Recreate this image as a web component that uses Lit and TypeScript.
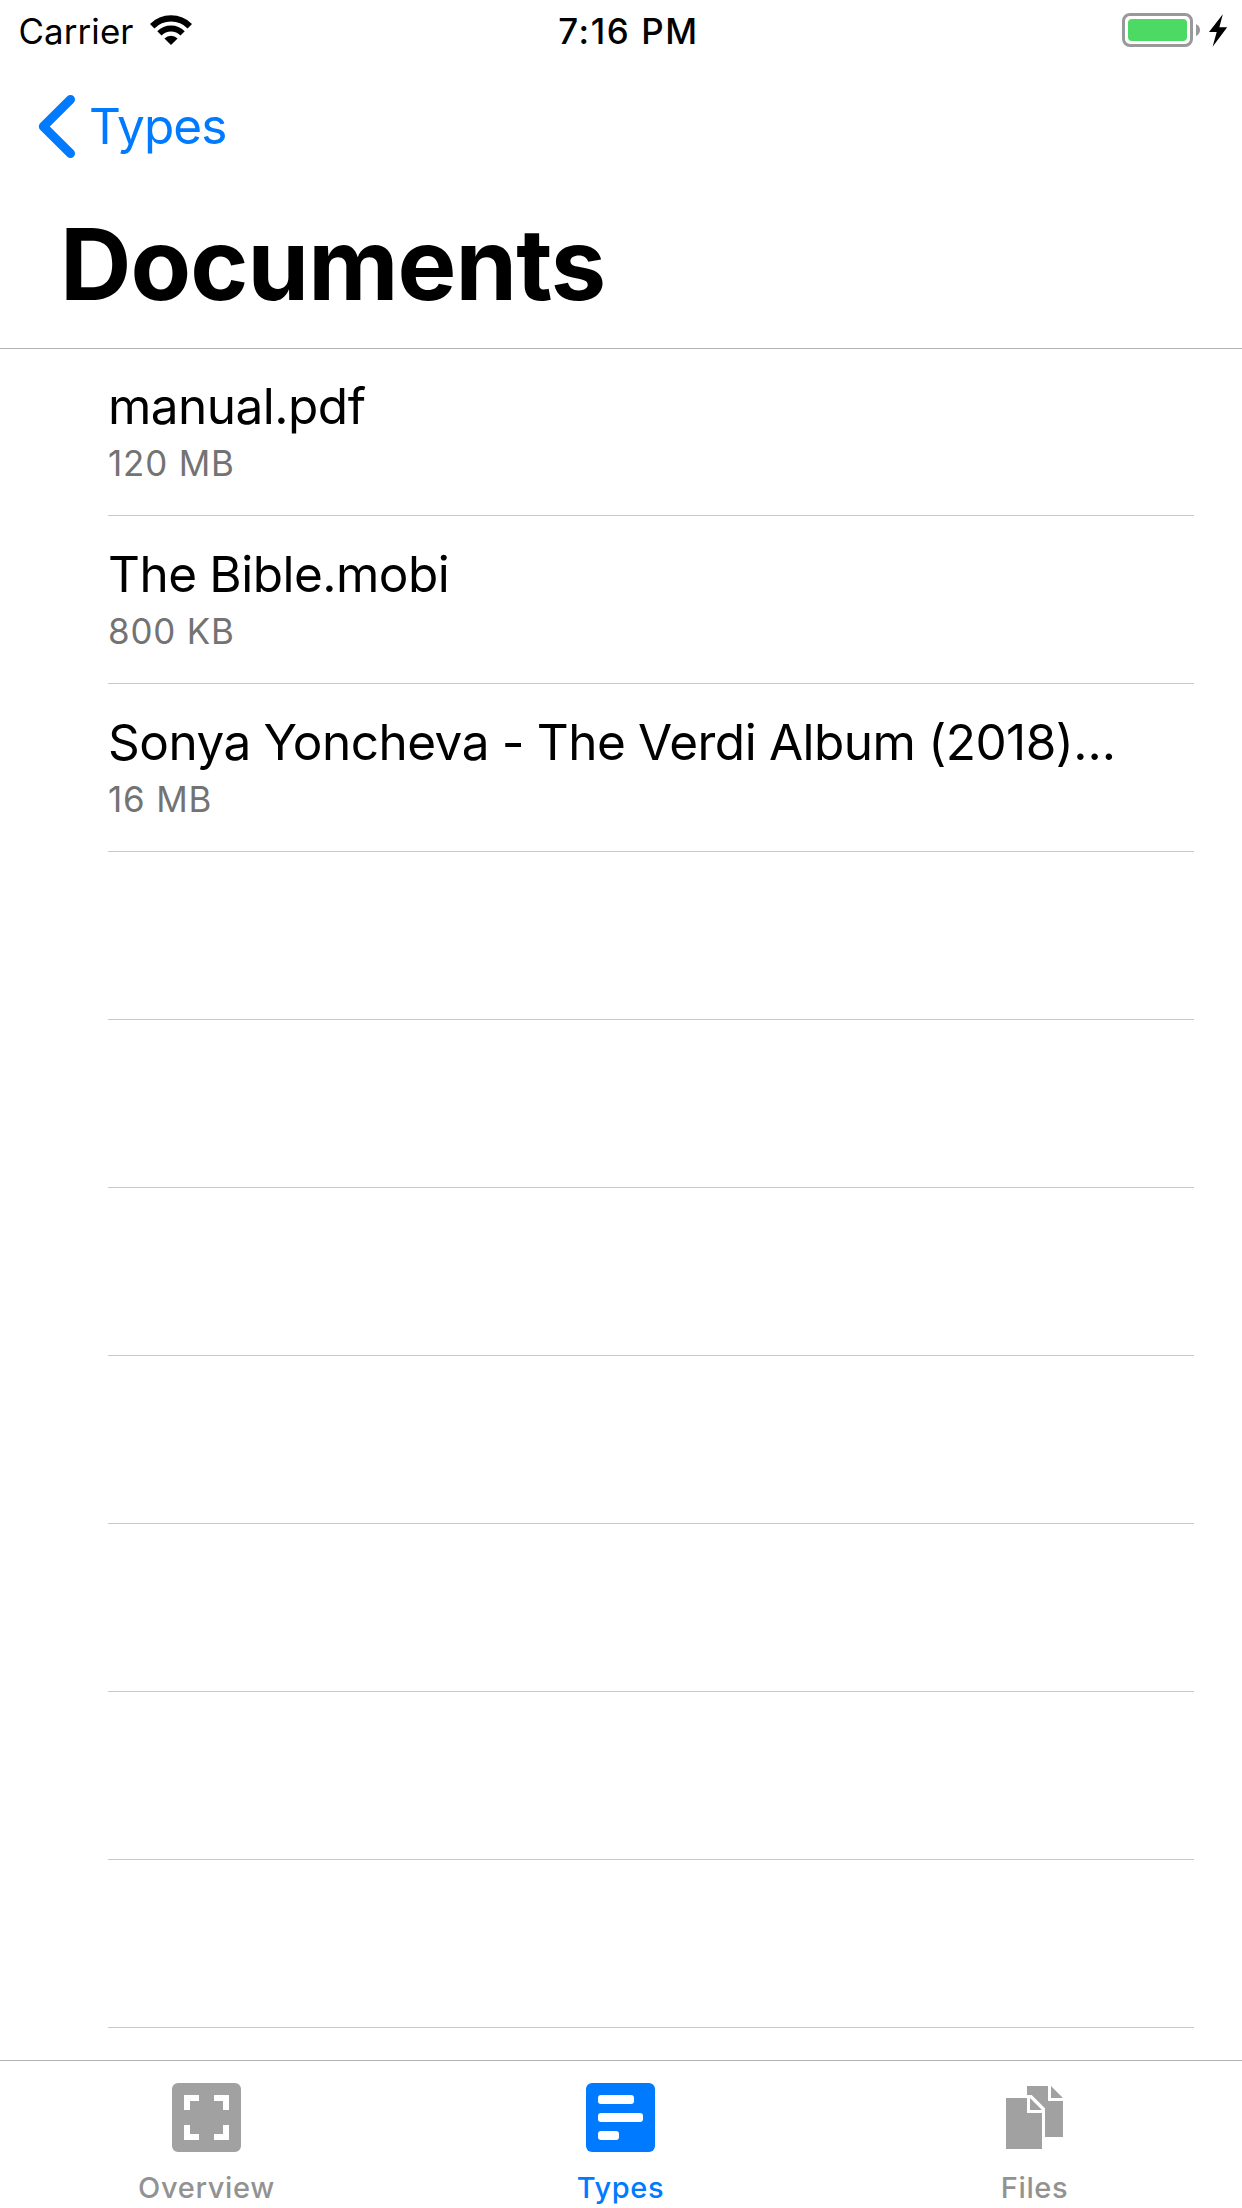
import { LitElement, html, svg, css } from "lit";
import { customElement, property } from "lit/decorators.js";
import { classMap } from "lit/directives/class-map.js";

interface FileEntry {
  name: string;
  size: string;
}

@customElement("status-bar")
class StatusBar extends LitElement {
  static styles = css`
    :host {
      display: grid;
      grid-template-columns: 1fr auto 1fr;
      height: 60px;
      line-height: 42px;
      font-size: 34.9px;
      color: #000;
    }
    .left {
      display: flex;
      align-items: flex-start;
      padding: 10px 0 0 18.5px;
    }
    .carrier {
      letter-spacing: 0.1px;
    }
    .wifi {
      margin: 4px 0 0 15.5px;
    }
    .time {
      padding: 10px 0 0 15px;
      font-weight: 550;
      letter-spacing: 1.6px;
    }
    .right {
      display: flex;
      justify-content: flex-end;
      padding: 12px 14px 0 0;
    }
    svg {
      display: block;
    }
  `;
  render() {
    return html`
      <div class="left">
        <span class="carrier">Carrier</span>
        <svg class="wifi" width="44" height="32" viewBox="0 0 44 32" fill="none" stroke="#000">
          <path d="M3.2 12.2 A26.6 26.6 0 0 1 40.8 12.2" stroke-width="6.2" />
          <path d="M10.4 19.4 A16.4 16.4 0 0 1 33.6 19.4" stroke-width="6" />
          <path d="M22 31 L15.4 24.4 A9.4 9.4 0 0 1 28.6 24.4 Z" fill="#000" stroke="none" />
        </svg>
      </div>
      <div class="time">7:16 PM</div>
      <div class="right">
        <svg width="106" height="36" viewBox="0 0 106 36">
          <rect x="1.5" y="2.5" width="68" height="31" rx="6.5" fill="none" stroke="#999" stroke-width="3" />
          <rect x="6" y="7" width="59" height="22" rx="4" fill="#4cd964" />
          <path d="M74 12 Q78 14 78 18 Q78 22 74 24 Z" fill="#999" />
          <path d="M100.8 2.2 L87 20 L94.7 20 L90.6 34.8 L105.2 15.2 L97.4 15.2 Z" fill="#000" />
        </svg>
      </div>
    `;
  }
}

@customElement("nav-header")
class NavHeader extends LitElement {
  @property() back = "";
  @property() heading = "";
  static styles = css`
    :host {
      display: block;
      height: 288px;
      box-shadow: 0 1px 0 #b2b2b2;
    }
    .back {
      display: flex;
      align-items: flex-start;
      padding: 34px 0 0 38px;
      color: #007aff;
    }
    .chevron {
      display: block;
      width: 38px;
      height: 66px;
    }
    .label {
      margin-left: 13px;
      padding-top: 2px;
      font-size: 49.5px;
      line-height: 60px;
      letter-spacing: -0.9px;
    }
    .heading {
      margin: 0;
      padding: 44px 0 0 60px;
      font-size: 98.9px;
      line-height: 120px;
      font-weight: 700;
      letter-spacing: -0.9px;
      color: #000;
    }
  `;
  render() {
    return html`
      <div class="back">
        <svg class="chevron" viewBox="0 0 38 66" fill="none" stroke="currentColor" stroke-width="9" stroke-linecap="round" stroke-linejoin="round">
          <path d="M32.5 5.5 L5.3 32.5 L32.5 59.5" />
        </svg>
        <span class="label">${this.back}</span>
      </div>
      <h1 class="heading">${this.heading}</h1>
    `;
  }
}

@customElement("file-list")
class FileList extends LitElement {
  @property({ attribute: false }) files: FileEntry[] = [];
  @property({ type: Number }) rows = 10;
  static styles = css`
    :host {
      display: block;
      padding: 0 48px 0 108px;
      overflow: hidden;
    }
    .row {
      box-sizing: border-box;
      height: 168px;
      padding-top: 28px;
      border-bottom: 1px solid #c8c8c8;
      white-space: nowrap;
    }
    .name {
      font-size: 49.5px;
      line-height: 60px;
      letter-spacing: -0.52px;
      word-spacing: -0.6px;
      color: #000;
    }
    .size {
      margin-top: 6px;
      font-size: 34.9px;
      line-height: 42px;
      letter-spacing: 0.85px;
      color: #737373;
    }
  `;
  render() {
    return Array.from({ length: this.rows }, (_, i) => {
      const file = this.files[i];
      return html`<div class="row">
        ${file
          ? html`<div class="name">${file.name}</div>
              <div class="size">${file.size}</div>`
          : ""}
      </div>`;
    });
  }
}

const icons = {
  overview: svg`<path fill="currentColor" fill-rule="evenodd" d="M6 0 H63 A6 6 0 0 1 69 6 V63 A6 6 0 0 1 63 69 H6 A6 6 0 0 1 0 63 V6 A6 6 0 0 1 6 0 Z
    M12 12 V27 H18 V18 H27 V12 Z M42 12 V18 H51 V27 H57 V12 Z M12 42 V57 H27 V51 H18 V42 Z M51 42 V51 H42 V57 H57 V42 Z" />`,
  types: svg`<rect width="69" height="69" rx="6" fill="currentColor" />
    <rect x="12" y="12" width="36" height="9" rx="3" fill="#fff" />
    <rect x="12" y="30" width="45" height="9" rx="3" fill="#fff" />
    <rect x="12" y="48" width="21" height="9" rx="3" fill="#fff" />`,
  files: svg`<path fill="currentColor" d="M6 15 H27 V30 H42 V66 H6 Z M30 15 L42 27 H30 Z
    M27 3 H48 V18 H63 V54 H45 V25.3 L31.7 12 H27 Z M51 3 L63 15 H51 Z" />`,
};

@customElement("tab-bar")
class TabBar extends LitElement {
  @property() active = "Types";
  static styles = css`
    :host {
      display: grid;
      grid-template-columns: repeat(3, 1fr);
      box-sizing: border-box;
      height: 148px;
      border-top: 1px solid #b2b2b2;
      background: #fff;
    }
    .tab {
      display: flex;
      flex-direction: column;
      align-items: center;
      padding: 22px 1px 0 0;
      color: #a1a1a1;
    }
    .icon {
      display: block;
      width: 69px;
      height: 69px;
    }
    .label {
      margin-top: 18px;
      font-size: 29px;
      line-height: 36px;
      font-weight: 500;
      letter-spacing: 0.65px;
      color: #929292;
    }
    .active,
    .active .label {
      color: #007aff;
    }
  `;
  render() {
    const tabs = [
      { label: "Overview", icon: icons.overview },
      { label: "Types", icon: icons.types },
      { label: "Files", icon: icons.files },
    ];
    return tabs.map(
      (t) => html`<div class=${classMap({ tab: true, active: t.label === this.active })}>
        <svg class="icon" viewBox="0 0 69 69">${t.icon}</svg>
        <span class="label">${t.label}</span>
      </div>`
    );
  }
}

@customElement("app-root")
class AppRoot extends LitElement {
  static styles = css`
    :host {
      display: flex;
      flex-direction: column;
      width: 1242px;
      height: 2208px;
      overflow: hidden;
      background: #fff;
      font-family: Inter, "Liberation Sans", sans-serif;
    }
    .list {
      flex: 1;
      min-height: 0;
    }
  `;
  private files: FileEntry[] = [
    { name: "manual.pdf", size: "120 MB" },
    { name: "The Bible.mobi", size: "800 KB" },
    { name: "Sonya Yoncheva - The Verdi Album (2018)…", size: "16 MB" },
  ];
  render() {
    return html`
      <status-bar></status-bar>
      <nav-header back="Types" heading="Documents"></nav-header>
      <file-list class="list" .files=${this.files}></file-list>
      <tab-bar active="Types"></tab-bar>
    `;
  }
}
